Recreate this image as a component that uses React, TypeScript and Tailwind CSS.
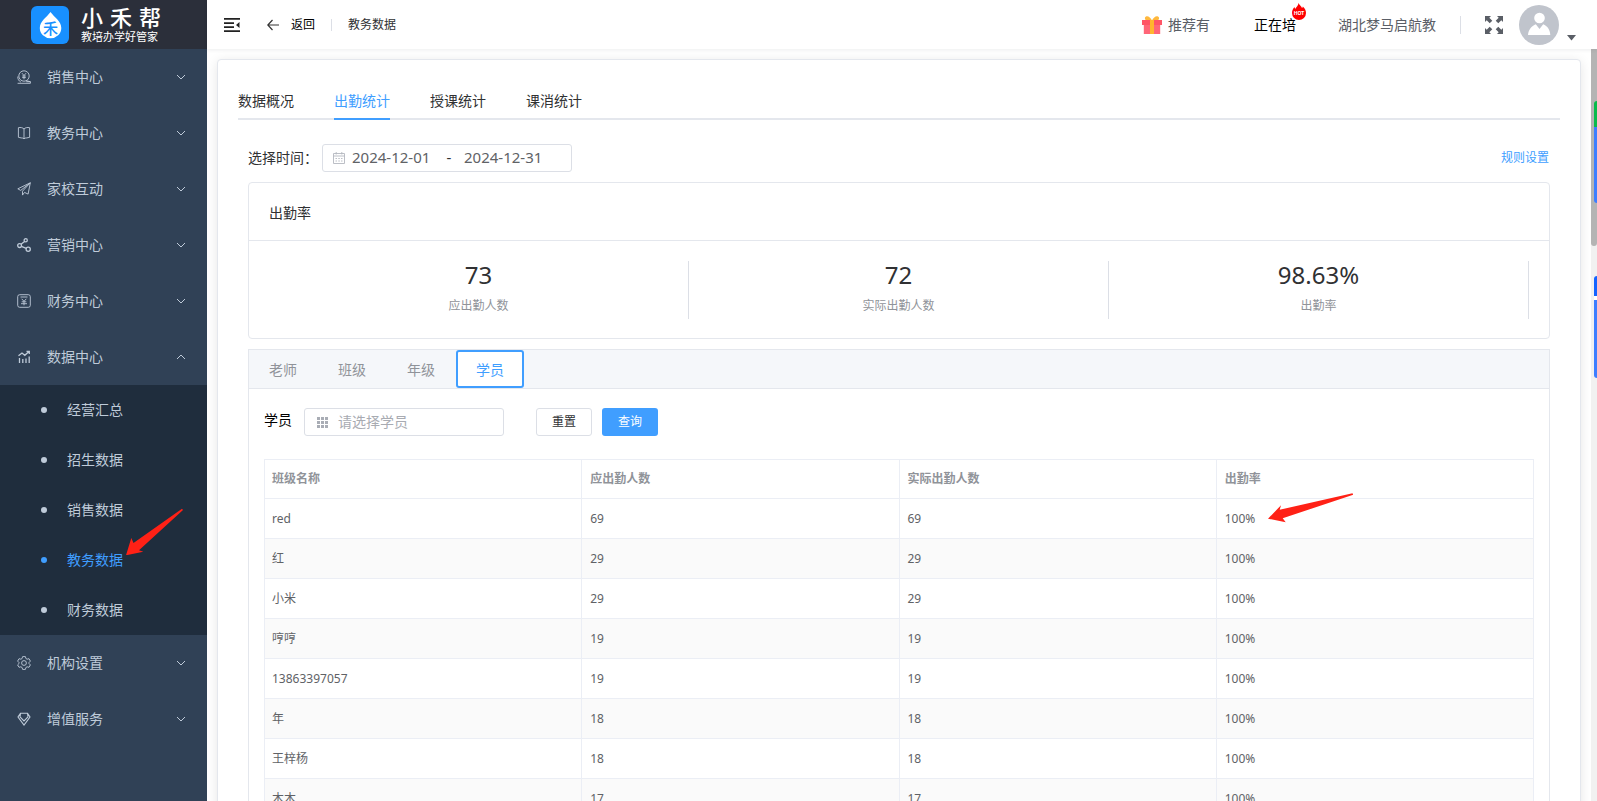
import { useState } from 'react';
import type { ReactNode } from 'react';
import clsx from 'clsx';

interface MenuItem {
  label: string;
  icon: ReactNode;
  children?: string[];
}

const menu: MenuItem[] = [
  {
    label: '销售中心',
    icon: (
      <>
        <circle cx="7" cy="6" r="5.2" />
        <path d="M5 3.2l2 2.3 2-2.3M7 5.5v3.8M5.2 6h3.6M5.2 7.6h3.6" />
        <path d="M.8 6.5C.6 9 1.8 11 3.8 12M.6 13.3h12.8v-1.6H9.2M9.5 10.8l3.9.9" />
      </>
    ),
  },
  {
    label: '教务中心',
    icon: <path d="M7 3C5.800 1.600 3.500 1.200 1.400 1.700v9.600c1.200.1 1.900.6 2.800.6 1.200 0 2 .2 2.800.9.800-.7 1.600-.9 2.800-.9.900 0 1.600-.5 2.800-.6V1.700C10.500 1.200 8.200 1.600 7 3zM7 3v9.800" />,
  },
  {
    label: '家校互动',
    icon: <path d="M13.300.800L.800 6.800l2.900 1.600L13.300.800 5.500 9.200v3.900l2-2.700 3.600 1.700L13.300.800z" />,
  },
  {
    label: '营销中心',
    icon: (
      <g strokeWidth="1.300">
        <circle cx="2.600" cy="7.600" r="1.900" />
        <circle cx="8.700" cy="2.300" r="1.600" />
        <circle cx="11.200" cy="11.200" r="2.100" />
        <path d="M4 6.300l3.600-2.900M4.400 8.400l4.900 2" />
      </g>
    ),
  },
  {
    label: '财务中心',
    icon: (
      <>
        <rect x=".7" y=".7" width="12.600" height="12.600" rx="2" />
        <path d="M3.500 3h7M4.700 4.800L7 7.300l2.300-2.500M7 7.300v4M4.700 7.800h4.600M4 9.700h6" />
      </>
    ),
  },
  {
    label: '数据中心',
    icon: <path strokeWidth="1.300" d="M2.500 8v5M5.800 9v4M9 8.500V13M12.200 6.500V13M1.500 5.800l3.500-2.700 2.800 2.200L12 1.500M9.500 1.300h2.800V4" />,
    children: ['经营汇总', '招生数据', '销售数据', '教务数据', '财务数据'],
  },
  {
    label: '机构设置',
    icon: (
      <>
        <circle cx="7" cy="7" r="2.400" />
        <path d="M5.600.600h2.800l.5 1.900 1.200.700 1.900-.500 1.400 2.400L12 6.500v1l1.400 1.400-1.400 2.400-1.900-.500-1.200.700-.5 1.900H5.600l-.5-1.900-1.200-.700-1.900.5L.600 8.900 2 7.500v-1L.600 5.100 2 2.700l1.900.500 1.200-.700z" />
      </>
    ),
  },
  {
    label: '增值服务',
    icon: <path strokeWidth="1.100" d="M3.500 1.200h7l2.500 3.800L7 13 1 5zM3 4.800L7 9l4-4.200M3.500 1.200L3 4.800M10.500 1.200l.5 3.600" />,
  },
];

const stats = [
  { value: '73', label: '应出勤人数' },
  { value: '72', label: '实际出勤人数' },
  { value: '98.63%', label: '出勤率' },
];

const columns = ['班级名称', '应出勤人数', '实际出勤人数', '出勤率'];

const rows = [
  ['red', '69', '69', '100%'],
  ['红', '29', '29', '100%'],
  ['小米', '29', '29', '100%'],
  ['哼哼', '19', '19', '100%'],
  ['13863397057', '19', '19', '100%'],
  ['年', '18', '18', '100%'],
  ['王梓杨', '18', '18', '100%'],
  ['木木', '17', '17', '100%'],
];

function Logo() {
  return (
    <div className="flex h-[49px] shrink-0 items-center gap-3 bg-[#2b2f3a] pl-[31px]">
      <svg className="h-[38px] w-[38px] shrink-0" viewBox="0 0 38 38">
        <rect width="38" height="38" rx="6" fill="#1890ff" />
        <path d="M19.500 6c3.500 5 10.800 9.200 10.800 16a10.700 10.200 0 0 1-21.500 0C8.800 15.200 16 11 19.500 6z" fill="#fff" />
        <text x="19.500" y="27.500" textAnchor="middle" fontSize="15" fontWeight="500" fill="#1890ff">禾</text>
      </svg>
      <div className="text-white">
        <div className="flex w-20 justify-between text-[22px] leading-6 font-medium">
          <span>小</span>
          <span>禾</span>
          <span>帮</span>
        </div>
        <div className="text-[11px] leading-4">教培办学好管家</div>
      </div>
    </div>
  );
}

function Sidebar() {
  const [open, setOpen] = useState('数据中心');
  const [active, setActive] = useState('教务数据');

  return (
    <aside className="flex w-[207px] shrink-0 flex-col bg-[#304156] text-sm text-[#bfcbd9]">
      <Logo />
      <nav>
        {menu.map((item) => {
          const isOpen = open === item.label;
          return (
            <div key={item.label}>
              <button
                onClick={() => setOpen(isOpen ? '' : item.label)}
                className="flex h-14 w-full cursor-pointer items-center pr-5 pl-[17px]"
              >
                <svg className="mr-4 h-3.5 w-3.5" viewBox="0 0 14 14" fill="none" stroke="currentColor" strokeWidth=".9">
                  {item.icon}
                </svg>
                {item.label}
                <svg className={clsx('ml-auto h-3 w-3', isOpen && 'rotate-180')} viewBox="0 0 12 12" fill="none" stroke="currentColor">
                  <path d="M2 4l4 4 4-4" />
                </svg>
              </button>
              {isOpen && item.children && (
                <ul className="bg-[#1f2d3d]">
                  {item.children.map((child) => (
                    <li key={child} className="relative">
                      <a
                        href="#"
                        onClick={() => setActive(child)}
                        className={clsx('flex h-[50px] items-center gap-5 pl-[41px]', active === child && 'text-[#409eff]')}
                      >
                        <span className="h-1.5 w-1.5 rounded-full bg-current" />
                        {child}
                      </a>
                      {child === '教务数据' && (
                        <svg className="pointer-events-none absolute -top-7 left-[126px] h-12 w-[58px]" viewBox="0 0 58 48" fill="#ff2116">
                          <path d="M0 48.300L5.300 31l2.200 5L56 1.700l1 1.300L13 43.300l4.300 1.400z" />
                        </svg>
                      )}
                    </li>
                  ))}
                </ul>
              )}
            </div>
          );
        })}
      </nav>
    </aside>
  );
}

function Header() {
  return (
    <header className="z-10 flex h-[49px] shrink-0 items-center bg-white pr-[21px] pl-[17px] shadow-[0_1px_4px_rgba(0,21,41,0.08)]">
      <button aria-label="收起菜单" className="mr-[27px]">
        <svg className="h-4 w-4" viewBox="0 0 16 16" fill="#222">
          <path d="M0 1h16v1.800H0zM0 5.200h10V7H0zM0 9.200h10V11H0zM0 13.200h16V15H0zM15.500 5v6L12 8z" />
        </svg>
      </button>
      <a href="#" className="flex items-center gap-3 text-xs text-black">
        <svg className="h-3 w-3" viewBox="0 0 12 12" fill="none" stroke="#333" strokeWidth="1.200">
          <path d="M12 6H.8M5.500 1L.8 6l4.700 5" />
        </svg>
        返回
      </a>
      <span className="mx-4 h-3 w-px bg-[#dcdfe6]" />
      <span className="text-xs text-[#303133]">教务数据</span>

      <div className="ml-auto flex items-center text-sm text-[#5a5e66]">
        <a href="#" className="flex items-center gap-1.5">
          <svg className="h-5 w-5" viewBox="0 0 20 20">
            <path d="M4 1.500C6 .5 8.500 2.500 10 5.500 11.500 2.500 14 .5 16 1.500s1 3.500-1 4.500H5c-2-1-3-3.500-1-4.500z" fill="#ffb83d" />
            <path d="M0 5h20v5H0z" fill="#ff5566" />
            <path d="M1.800 10h16.400v9H1.800z" fill="#ff6678" />
            <path d="M8 5h4v14H8z" fill="#ffb52e" />
          </svg>
          推荐有
        </a>
        <a href="#" className="relative ml-11 text-black">
          正在培
          <svg className="absolute -top-3 left-[38px] h-[17px] w-3.5" viewBox="0 0 14 17">
            <path d="M6.500 0c.5 2 3 3 3.500 5 .5-.3.800-.8.800-1.500C13 5.500 14 7.500 14 10a7 7 0 0 1-14 0c0-2.500 1-4.500 2.500-6 .2 1 .5 1.500 1 1.800C4 4 6.500 2.500 6.500 0z" fill="#f00" />
            <text x="7" y="12" textAnchor="middle" fontSize="5" fontWeight="700" fill="#fff">HOT</text>
          </svg>
        </a>
        <span className="ml-[42px]">湖北梦马启航教</span>
        <span className="mx-6 h-[18px] w-px bg-[#dcdfe6]" />
        <button aria-label="全屏">
          <svg className="h-[18px] w-[18px]" viewBox="0 0 18 18" fill="#5a5e66">
            <path d="M0 0h6L4.300 1.700l3 3-2.600 2.600-3-3L0 6zM18 0v6l-1.700-1.700-3 3-2.600-2.600 3-3L12 0zM0 18v-6l1.700 1.700 3-3 2.600 2.600-3 3L6 18zM18 18h-6l1.700-1.700-3-3 2.600-2.600 3 3L18 12z" />
          </svg>
        </button>
        <button aria-label="个人中心" className="ml-4 flex items-end gap-2">
          <svg className="h-10 w-10" viewBox="0 0 40 40">
            <circle cx="20" cy="20" r="20" fill="#c0c4cc" />
            <circle cx="20.500" cy="13" r="5.300" fill="#fff" />
            <path d="M9 30c.5-5.500 3.500-9 7.800-10.800L20.500 24l3.700-4.800C28.500 21 31 24.500 31.300 30z" fill="#fff" />
          </svg>
          <svg className="mb-1 h-1.5 w-[9px]" viewBox="0 0 9 6" fill="#5a5e66">
            <path d="M0 0h9L4.500 5.500z" />
          </svg>
        </button>
      </div>
    </header>
  );
}

function DateRange() {
  return (
    <div className="flex items-center text-sm">
      <label htmlFor="date-start" className="mr-1 text-[#303133]">选择时间：</label>
      <div className="flex h-7 w-[250px] items-center rounded-[3px] border border-[#dcdfe6] px-2.5 text-[15px] text-[#606266]">
        <svg className="mr-[7px] h-3 w-3 shrink-0" viewBox="0 0 12 12" fill="none" stroke="#b4b8bf" strokeWidth=".9">
          <path d="M.5 1.500h11v10H.5zM.5 4h11M3.200 0v2.500M8.800 0v2.500M2.500 6.500h1.500M5.300 6.500h1.500M8 6.500h1.500M2.500 9h1.500M5.300 9h1.500M8 9h1.500" />
        </svg>
        <input id="date-start" defaultValue="2024-12-01" className="w-[82px] outline-none" />
        <span className="w-[30px] text-center text-[#303133]">-</span>
        <input aria-label="结束日期" defaultValue="2024-12-31" className="w-[82px] outline-none" />
      </div>
      <a href="#" className="mr-px ml-auto text-xs text-[#409eff]">规则设置</a>
    </div>
  );
}

function StatsCard() {
  return (
    <section className="mt-2.5 rounded border border-[#e4e7ed]">
      <h2 className="border-b border-[#e4e7ed] px-5 pt-5 pb-[17px] text-sm text-[#303133]">出勤率</h2>
      <div className="grid grid-cols-3 px-5 pt-5 pb-[19px]">
        {stats.map((s) => (
          <div key={s.label} className="flex flex-col items-center border-r border-[#dcdfe6] pb-1">
            <div className="text-2xl leading-7 text-[#303133]">{s.value}</div>
            <div className="mt-2 text-xs leading-[18px] text-[#909399]">{s.label}</div>
          </div>
        ))}
      </div>
    </section>
  );
}

function AttendanceTable() {
  return (
    <table className="mt-[23px] w-full table-fixed border-separate border-spacing-0 border-t border-l border-[#ebeef5] text-left text-xs">
      <thead>
        <tr className="text-[#909399]">
          {columns.map((c) => (
            <th key={c} className="h-[39px] border-r border-b border-[#ebeef5] px-2 font-bold first:pl-[7px]">{c}</th>
          ))}
        </tr>
      </thead>
      <tbody className="text-[#606266]">
        {rows.map((row, i) => (
          <tr key={row[0]} className="even:bg-[#fafafa]">
            {row.map((cell, j) => (
              <td key={j} className="relative h-10 border-r border-b border-[#ebeef5] px-2 first:pl-[7px]">
                {cell}
                {i === 0 && j === 3 && (
                  <svg className="pointer-events-none absolute -top-1.5 left-[51px] h-[30px] w-[86px]" viewBox="0 0 86 30" fill="#ff2116">
                    <path d="M0 25.700L13 12.300l-1.300 4.400L84.500.300l.7 1.400L14.700 25.300l3 4z" />
                  </svg>
                )}
              </td>
            ))}
          </tr>
        ))}
      </tbody>
    </table>
  );
}

function DetailPanel() {
  const tabs = ['老师', '班级', '年级', '学员'];
  const [tab, setTab] = useState('学员');

  return (
    <section className="mt-2.5 border border-[#e4e7ed]">
      <div className="flex h-[39px] border-b border-[#e4e7ed] bg-[#f5f7fa]">
        {tabs.map((t) => (
          <button
            key={t}
            onClick={() => setTab(t)}
            className={clsx(
              'mr-px px-5 pt-0.5 text-sm',
              tab === t ? 'rounded-[3px] bg-white text-[#409eff] inset-ring-2 inset-ring-[#409eff]' : 'text-[#909399]'
            )}
          >
            {t}
          </button>
        ))}
      </div>
      <div className="px-[15px] pt-[19px] pb-4">
        <form className="flex items-center" onSubmit={(e) => e.preventDefault()}>
          <label htmlFor="student" className="mr-3 pb-1 text-sm text-black">学员</label>
          <div className="flex h-7 w-[200px] items-center rounded-[3px] border border-[#dcdfe6] pr-2 pl-3">
            <svg className="mr-2.5 h-[11px] w-[11px] shrink-0" viewBox="0 0 11 11" fill="#a9adb5">
              <path d="M0 0h3v3H0zM4 0h3v3H4zM8 0h3v3H8zM0 4h3v3H0zM4 4h3v3H4zM8 4h3v3H8zM0 8h3v3H0zM4 8h3v3H4zM8 8h3v3H8z" />
            </svg>
            <input id="student" placeholder="请选择学员" className="w-full text-sm outline-none placeholder:text-[#a8abb2]" />
          </div>
          <button type="reset" className="ml-8 h-7 w-14 rounded-[3px] border border-[#dcdfe6] text-xs text-[#303133]">重置</button>
          <button type="submit" className="ml-2.5 h-7 w-14 rounded-[3px] bg-[#409eff] text-xs text-white">查询</button>
        </form>
        <AttendanceTable />
      </div>
    </section>
  );
}

export default function App() {
  const tabs = ['数据概况', '出勤统计', '授课统计', '课消统计'];
  const [tab, setTab] = useState('出勤统计');

  return (
    <div className="flex h-screen overflow-hidden bg-white font-['Noto_Sans','Noto_Sans_CJK_SC',sans-serif]">
      <Sidebar />
      <div className="flex min-w-0 flex-1 flex-col">
        <Header />
        <div className="relative flex min-h-0 flex-1">
          <main className="min-w-0 flex-1 overflow-hidden p-2.5">
            <div className="rounded border border-[#e4e7ed] bg-white p-5 shadow-[0_2px_12px_rgba(0,0,0,0.1)]">
              <div className="flex h-10 gap-10 border-b-2 border-[#e4e7ed] text-sm">
                {tabs.map((t) => (
                  <button
                    key={t}
                    onClick={() => setTab(t)}
                    className={clsx('-mb-0.5 border-b-2 pt-1', tab === t ? 'border-[#409eff] text-[#409eff]' : 'border-transparent text-[#303133]')}
                  >
                    {t}
                  </button>
                ))}
              </div>
              <div className="px-2.5 pt-6">
                <DateRange />
                <StatsCard />
                <DetailPanel />
              </div>
            </div>
          </main>
          {/* Scrollbar */}
          <div className="w-1.5 bg-[#f1f1f1]">
            <div className="h-[197px] rounded-b-sm bg-[#b4b4b4]" />
          </div>
          {/* Floating service widgets */}
          <div className="absolute top-[52px] right-0 w-[3px] overflow-hidden rounded-l-md">
            <div className="h-[26px] bg-[#09bb4b]" />
            <div className="h-[76px] bg-[#3d7eff]" />
          </div>
          <div className="absolute top-[227px] right-0 w-[3px] overflow-hidden rounded-l-md">
            <div className="h-5 bg-[#1463ff]" />
            <div className="h-1 bg-white" />
            <div className="h-[78px] bg-[#3d7eff]" />
          </div>
        </div>
      </div>
    </div>
  );
}
